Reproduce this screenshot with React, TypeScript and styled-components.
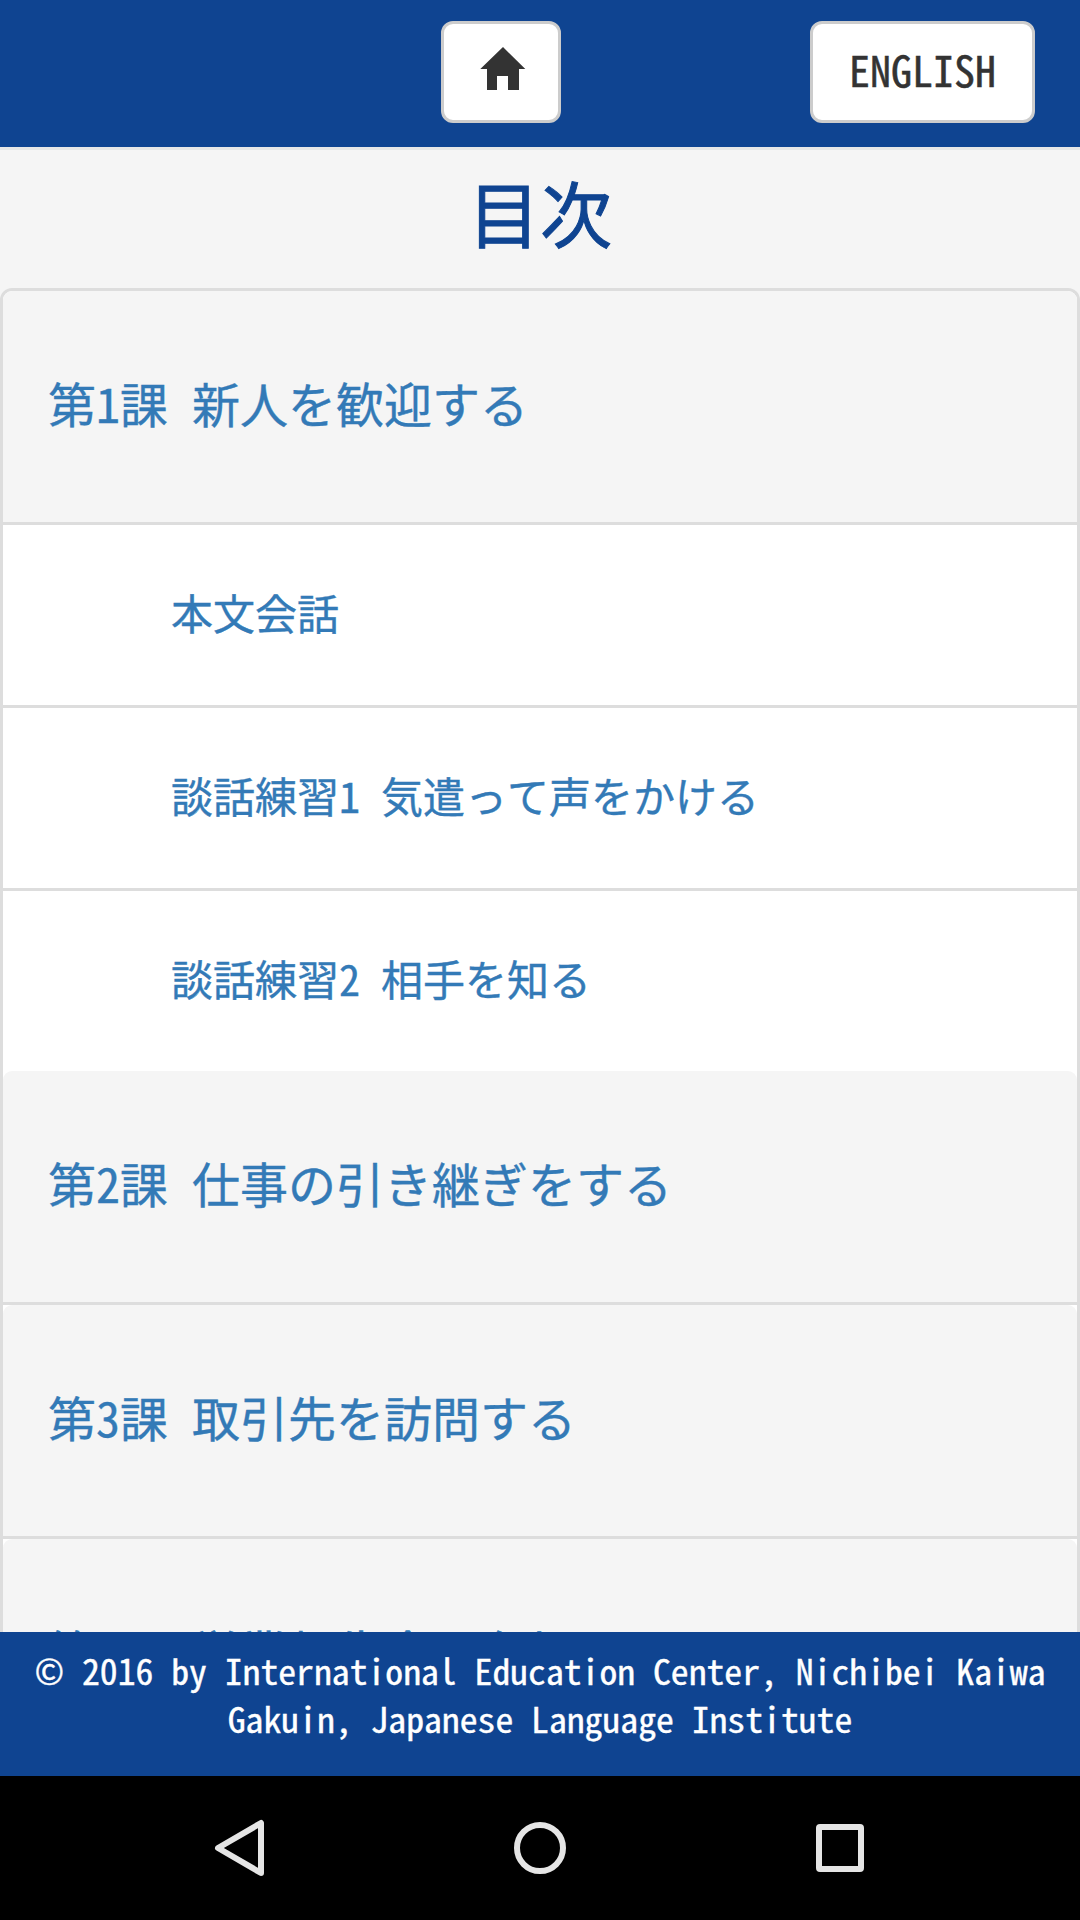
import React from "react";
import styled, { createGlobalStyle } from "styled-components";

const GlobalStyle = createGlobalStyle`
  *, *::before, *::after { box-sizing: border-box; }
  html, body { margin: 0; padding: 0; }
  body {
    background: #f5f5f5;
    font-family: "Noto Sans CJK JP", "Liberation Sans", sans-serif;
    font-feature-settings: "hwid" 1;
    font-kerning: none;
    font-size: 42px;
    line-height: 60px;
    color: #333;
    overflow: hidden;
  }
`;

const Screen = styled.div`
  width: 1080px;
  height: 1920px;
  display: flex;
  flex-direction: column;
  overflow: hidden;
`;

const TopBar = styled.header`
  flex: none;
  height: 150px;
  padding: 21px 45px 0;
  display: grid;
  grid-template-columns: 1fr auto 1fr;
  align-items: start;
  background: #0f4491;
  border-bottom: 3px solid #e7e7e7;
`;

const Button = styled.button<{ $end?: boolean }>`
  grid-column: ${(p) => (p.$end ? 3 : 2)};
  justify-self: ${(p) => (p.$end ? "end" : "center")};
  ${(p) => (p.$end ? "" : "margin-right: 78px;")}
  height: 102px;
  padding: 0 36px 7px;
  display: flex;
  align-items: center;
  border: 3px solid #ccc;
  border-radius: 12px;
  background: #fff;
  color: #333;
  font: inherit;
  font-feature-settings: inherit;
  -webkit-text-stroke: 0.5px currentColor;
`;

const HomeIcon = styled.svg`
  display: block;
  width: 46px;
  height: 44px;
  margin: 0 -4px 0 0;
`;

const Main = styled.main`
  flex: 1;
  min-height: 0;
  overflow: hidden;
`;

const Title = styled.h3`
  margin: 0;
  height: 138px;
  padding-top: 21px;
  font-size: 72px;
  line-height: 79px;
  font-weight: 400;
  -webkit-text-stroke: 1px currentColor;
  text-align: center;
  color: #0f4491;
`;

const Contents = styled.section`
  border: 3px solid #ddd;
  border-radius: 12px;
  background: #fff;
`;

const LessonGroup = styled.div<{ $divided: boolean }>`
  border-top: ${(p) => (p.$divided ? "3px solid #ddd" : "0")};
`;

const LessonHeading = styled.h4`
  margin: 0;
  height: 231px;
  padding: 0 45px 9px;
  display: flex;
  align-items: center;
  border-radius: 9px 9px 0 0;
  background: #f5f5f5;
  font-size: 48px;
  font-weight: 400;
`;

const TopicList = styled.ul`
  margin: 0;
  padding: 0;
  list-style: none;
`;

const Topic = styled.li`
  height: 183px;
  padding: 0 45px 6px 168px;
  display: flex;
  align-items: center;
  border-top: 3px solid #ddd;
`;

const Link = styled.a`
  color: #337ab7;
  text-decoration: none;
  white-space: pre;
  -webkit-text-stroke: 0.4px currentColor;
`;

const Footer = styled.footer`
  flex: none;
  height: 144px;
  padding-top: 14px;
  background: #0f4491;
  color: #fff;
  font-size: 35.7px;
  line-height: 48px;
  text-align: center;
  -webkit-text-stroke: 0.4px currentColor;
`;

const NavBar = styled.nav`
  flex: none;
  height: 144px;
  padding: 0 90px;
  display: grid;
  grid-template-columns: repeat(3, 1fr);
  place-items: center;
  background: #000;
`;

const NavIcon = styled.svg`
  display: block;
  width: 60px;
  height: 60px;
  fill: none;
  stroke: #e5e5e5;
  stroke-width: 6;
  stroke-linejoin: round;
`;

interface LessonData {
  title: string;
  topics?: string[];
}

const lessons: LessonData[] = [
  {
    title: "第1課 新人を歓迎する",
    topics: ["本文会話", "談話練習1 気遣って声をかける", "談話練習2 相手を知る"],
  },
  { title: "第2課 仕事の引き継ぎをする" },
  { title: "第3課 取引先を訪問する" },
  { title: "第4課 営業報告会に参加する" },
];

export default function App() {
  return (
    <>
      <GlobalStyle />
      <Screen>
        <TopBar>
          <Button aria-label="Home">
            <HomeIcon viewBox="0 0 46 44">
              <path fill="#333" d="M23 0 45.3 22H39v21H28V29H17v14H7V22H.3z" />
            </HomeIcon>
          </Button>
          <Button $end>ENGLISH</Button>
        </TopBar>
        <Main>
          <Title>目次</Title>
          <Contents>
            {lessons.map((lesson, i) => (
              <LessonGroup key={lesson.title} $divided={i > 1}>
                <LessonHeading>
                  <Link>{lesson.title}</Link>
                </LessonHeading>
                {lesson.topics && (
                  <TopicList>
                    {lesson.topics.map((topic) => (
                      <Topic key={topic}>
                        <Link>{topic}</Link>
                      </Topic>
                    ))}
                  </TopicList>
                )}
              </LessonGroup>
            ))}
          </Contents>
        </Main>
        <Footer>
          © 2016 by International Education Center, Nichibei Kaiwa Gakuin, Japanese Language Institute
        </Footer>
        <NavBar>
          <NavIcon viewBox="0 0 60 60">
            <path d="M8 30 51 5v50z" />
          </NavIcon>
          <NavIcon viewBox="0 0 60 60">
            <circle cx="30" cy="30" r="23" />
          </NavIcon>
          <NavIcon viewBox="0 0 60 60">
            <rect x="9" y="9" width="42" height="42" rx="1" />
          </NavIcon>
        </NavBar>
      </Screen>
    </>
  );
}
